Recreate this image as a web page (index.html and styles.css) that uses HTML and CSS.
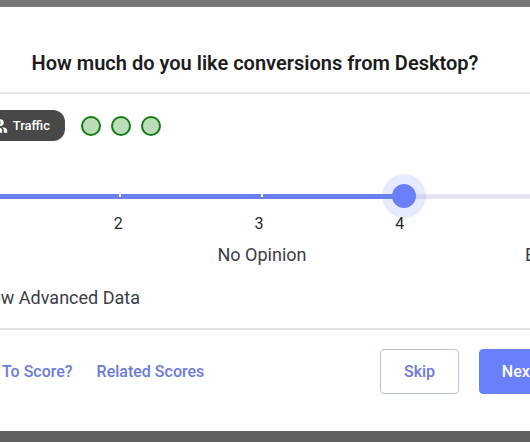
FILE: index.html
```html
<!DOCTYPE html>
<html lang="en">
<head>
  <meta charset="UTF-8">
  <meta name="viewport" content="width=device-width, initial-scale=1.0">
  <title>Score Conversions</title>
  <link rel="stylesheet" href="styles.css">
</head>
<body>

<main class="dialog">
  <header class="dialog-header">
    <h1>How much do you like conversions from Desktop?</h1>
  </header>

  <section class="dialog-body">
    <div class="metric">
      <span class="chip">
        <svg class="chip-icon" viewBox="0 0 24 24" aria-hidden="true">
          <path d="M16.67 13.13C18.04 14.06 19 15.32 19 17v3h4v-3c0-2.18-3.57-3.47-6.33-3.87z"/>
          <path d="M15 12c2.21 0 4-1.79 4-4s-1.79-4-4-4c-.47 0-.91.1-1.33.24C14.5 5.27 15 6.58 15 8s-.5 2.73-1.33 3.76c.42.14.86.24 1.33.24z"/>
          <circle cx="9" cy="8" r="4"/>
          <path d="M9 13c-2.67 0-8 1.34-8 4v3h16v-3c0-2.66-5.33-4-8-4z"/>
        </svg>
        Traffic
      </span>
      <span class="dot"></span>
      <span class="dot"></span>
      <span class="dot"></span>
    </div>

    <input class="slider" type="range" min="1" max="5" step="1" value="4" aria-label="Score">

    <div class="scale">
      <span>1</span>
      <span>2</span>
      <span>3</span>
      <span>4</span>
      <span>5</span>
    </div>
    <div class="captions">
      <span>Bad</span>
      <span>No Opinion</span>
      <span>Excellent</span>
    </div>

    <button class="advanced" type="button">Show Advanced Data</button>
  </section>

  <footer class="dialog-footer">
    <nav class="links">
      <a href="#">How To Score?</a>
      <a href="#">Related Scores</a>
    </nav>
    <div class="actions">
      <button class="btn btn-outline" type="button">Skip</button>
      <button class="btn btn-primary" type="button">Next</button>
    </div>
  </footer>
</main>

</body>
</html>
```
FILE: styles.css
```css
* {
  box-sizing: border-box;
}

body {
  margin: 0;
  padding: 7px 0 11px;
  overflow: hidden;
  background: linear-gradient(#777 50%, #5f5f5f 50%);
  font-family: Roboto, "Liberation Sans", sans-serif;
  font-size: 18px;
  line-height: 24px;
  color: #3c3c46;
}

/* the dialog runs past both sides of the window */
.dialog {
  margin: 0 -52px 0 -58px;
  background: #fff;
}

.dialog-header {
  padding: 41px 38px 14px 24px;
  border-bottom: 2px solid #e6e6e8;
}

h1 {
  margin: 0;
  font-size: 20px;
  font-weight: 600;
  line-height: 30px;
  text-align: center;
  color: #1c1c1e;
}

.dialog-body {
  padding: 16px 24px 18px;
  border-bottom: 2px solid #e2e2e4;
}

.metric {
  display: flex;
  align-items: center;
  gap: 10px;
}

.chip {
  display: flex;
  align-items: center;
  justify-content: flex-end;
  gap: 5px;
  width: 99px;
  height: 31px;
  margin-right: 6px;
  padding: 0 15px;
  border-radius: 12px;
  background: #484848;
  color: #fff;
  font-size: 13px;
  font-weight: 500;
}

.chip-icon {
  flex: none;
  width: 20px;
  height: 20px;
  fill: #fff;
}

.dot {
  width: 20px;
  height: 20px;
  border: 2px solid #0f7d14;
  border-radius: 50%;
  background: #bcdcb8;
}

.slider {
  -webkit-appearance: none;
  appearance: none;
  display: block;
  width: 100%;
  height: 26px;
  margin: 42px 0 0;
  background: none;
}

.slider::-webkit-slider-runnable-track {
  height: 5px;
  background:
    linear-gradient(#fff, #fff) 26% 0 / 2px 3px no-repeat,
    linear-gradient(#fff, #fff) 50% 0 / 2px 3px no-repeat,
    linear-gradient(to right, #6b7ff0 74%, #e6e4f0 74%);
}

.slider::-webkit-slider-thumb {
  -webkit-appearance: none;
  width: 24px;
  height: 24px;
  margin-top: -10px;
  border-radius: 50%;
  background: #6a80fb;
  box-shadow: 0 0 0 10px rgba(106, 128, 251, 0.16);
}

.scale {
  display: flex;
  justify-content: space-between;
  padding: 0 13px 0 7px;
  margin-top: 3px;
  font-size: 16px;
  color: #2a2a2e;
}

.captions {
  display: grid;
  grid-template-columns: 33px 1fr 33px;
  margin-top: 7px;
  white-space: nowrap;
}

.captions span:nth-child(2) {
  text-align: center;
}

.advanced {
  display: block;
  margin-top: 19px;
  padding: 0 4px;
  border: 0;
  background: none;
  font: inherit;
  color: inherit;
}

.dialog-footer {
  display: flex;
  justify-content: space-between;
  align-items: center;
  padding: 19px 24px 37px;
}

.links {
  display: flex;
  gap: 24px;
}

.links a {
  font-size: 16px;
  font-weight: 500;
  color: #6b7bdc;
  text-decoration: none;
  white-space: nowrap;
}

.actions {
  display: flex;
  gap: 20px;
}

.btn {
  width: 79px;
  height: 45px;
  border: 1px solid #b9bfe6;
  border-radius: 4px;
  font-family: inherit;
  font-size: 16px;
  font-weight: 500;
}

.btn-outline {
  background: #fff;
  color: #6b7bdc;
}

.btn-primary {
  border-color: #6a80fb;
  background: #6a80fb;
  color: #fff;
}
```
